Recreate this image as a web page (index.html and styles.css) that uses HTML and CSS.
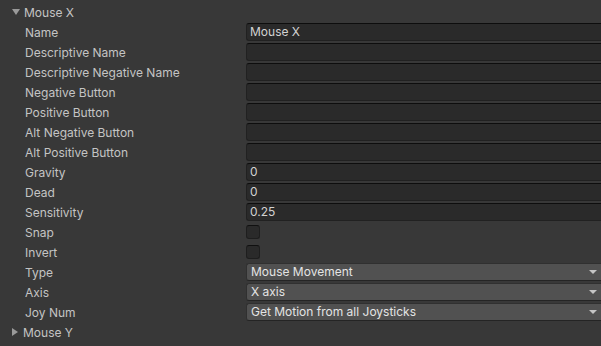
FILE: index.html
```html
<!DOCTYPE html>
<html>
<head>
<meta charset="utf-8">
<link rel="stylesheet" href="styles.css">
</head>
<body>
<div class="panel">
  <div class="foldout"><span class="arrow-down"></span><span class="ftitle">Mouse X</span></div>
  <div class="row"><span class="label">Name</span><div class="field">Mouse X</div></div>
  <div class="row"><span class="label">Descriptive Name</span><div class="field"></div></div>
  <div class="row"><span class="label">Descriptive Negative Name</span><div class="field"></div></div>
  <div class="row"><span class="label">Negative Button</span><div class="field"></div></div>
  <div class="row"><span class="label">Positive Button</span><div class="field"></div></div>
  <div class="row"><span class="label">Alt Negative Button</span><div class="field"></div></div>
  <div class="row"><span class="label">Alt Positive Button</span><div class="field"></div></div>
  <div class="row"><span class="label">Gravity</span><div class="field">0</div></div>
  <div class="row"><span class="label">Dead</span><div class="field">0</div></div>
  <div class="row"><span class="label">Sensitivity</span><div class="field">0.25</div></div>
  <div class="row"><span class="label">Snap</span><div class="check"></div></div>
  <div class="row"><span class="label">Invert</span><div class="check"></div></div>
  <div class="row"><span class="label">Type</span><div class="dropdown"><span>Mouse Movement</span><span class="caret"></span></div></div>
  <div class="row"><span class="label">Axis</span><div class="dropdown"><span>X axis</span><span class="caret"></span></div></div>
  <div class="row"><span class="label">Joy Num</span><div class="dropdown"><span>Get Motion from all Joysticks</span><span class="caret"></span></div></div>
  <div class="foldout"><span class="arrow-right"></span><span class="ftitle">Mouse Y</span></div>
</div>
</body>
</html>
```
FILE: styles.css
```css
html, body {
  margin: 0;
  padding: 0;
  background: #383838;
  width: 601px;
  height: 346px;
  overflow: hidden;
}
.panel {
  padding-top: 2px;
  font-family: Inter, "Noto Sans", sans-serif;
  font-size: 12px;
  color: #c4c4c4;
}
.foldout {
  height: 20px;
  display: flex;
  align-items: center;
  padding-left: 12px;
}
.ftitle { margin-left: 4px; }
.arrow-down {
  width: 0; height: 0;
  border-left: 4px solid transparent;
  border-right: 4px solid transparent;
  border-top: 6px solid #9a9a9a;
}
.arrow-right {
  width: 0; height: 0;
  border-top: 4px solid transparent;
  border-bottom: 4px solid transparent;
  border-left: 6px solid #9a9a9a;
  margin-right: 1px;
}
.row {
  height: 20px;
  display: flex;
  align-items: center;
}
.label {
  width: 221px;
  padding-left: 25px;
  flex: none;
}
.field {
  flex: 1;
  height: 16px;
  margin-top: 0;
  background: #2a2a2a;
  border: 1px solid #212121;
  border-top-color: #0d0d0d;
  border-right: none;
  border-radius: 3px 0 0 3px;
  color: #d2d2d2;
  padding-left: 3px;
  line-height: 16px;
}
.check {
  width: 12px;
  height: 12px;
  background: #2a2a2a;
  border: 1px solid #1e1e1e;
  border-top-color: #101010;
  border-radius: 3px;
}
.dropdown {
  flex: 1;
  height: 16px;
  background: #515151;
  border: 1px solid #303030;
  border-bottom-color: #242424;
  border-right: none;
  border-radius: 3px 0 0 3px;
  color: #e4e4e4;
  padding-left: 4px;
  line-height: 16px;
  display: flex;
  justify-content: space-between;
  align-items: center;
}
.caret {
  width: 0; height: 0;
  border-left: 4px solid transparent;
  border-right: 4px solid transparent;
  border-top: 4px solid #c4c4c4;
  margin-right: 4px;
}
```
